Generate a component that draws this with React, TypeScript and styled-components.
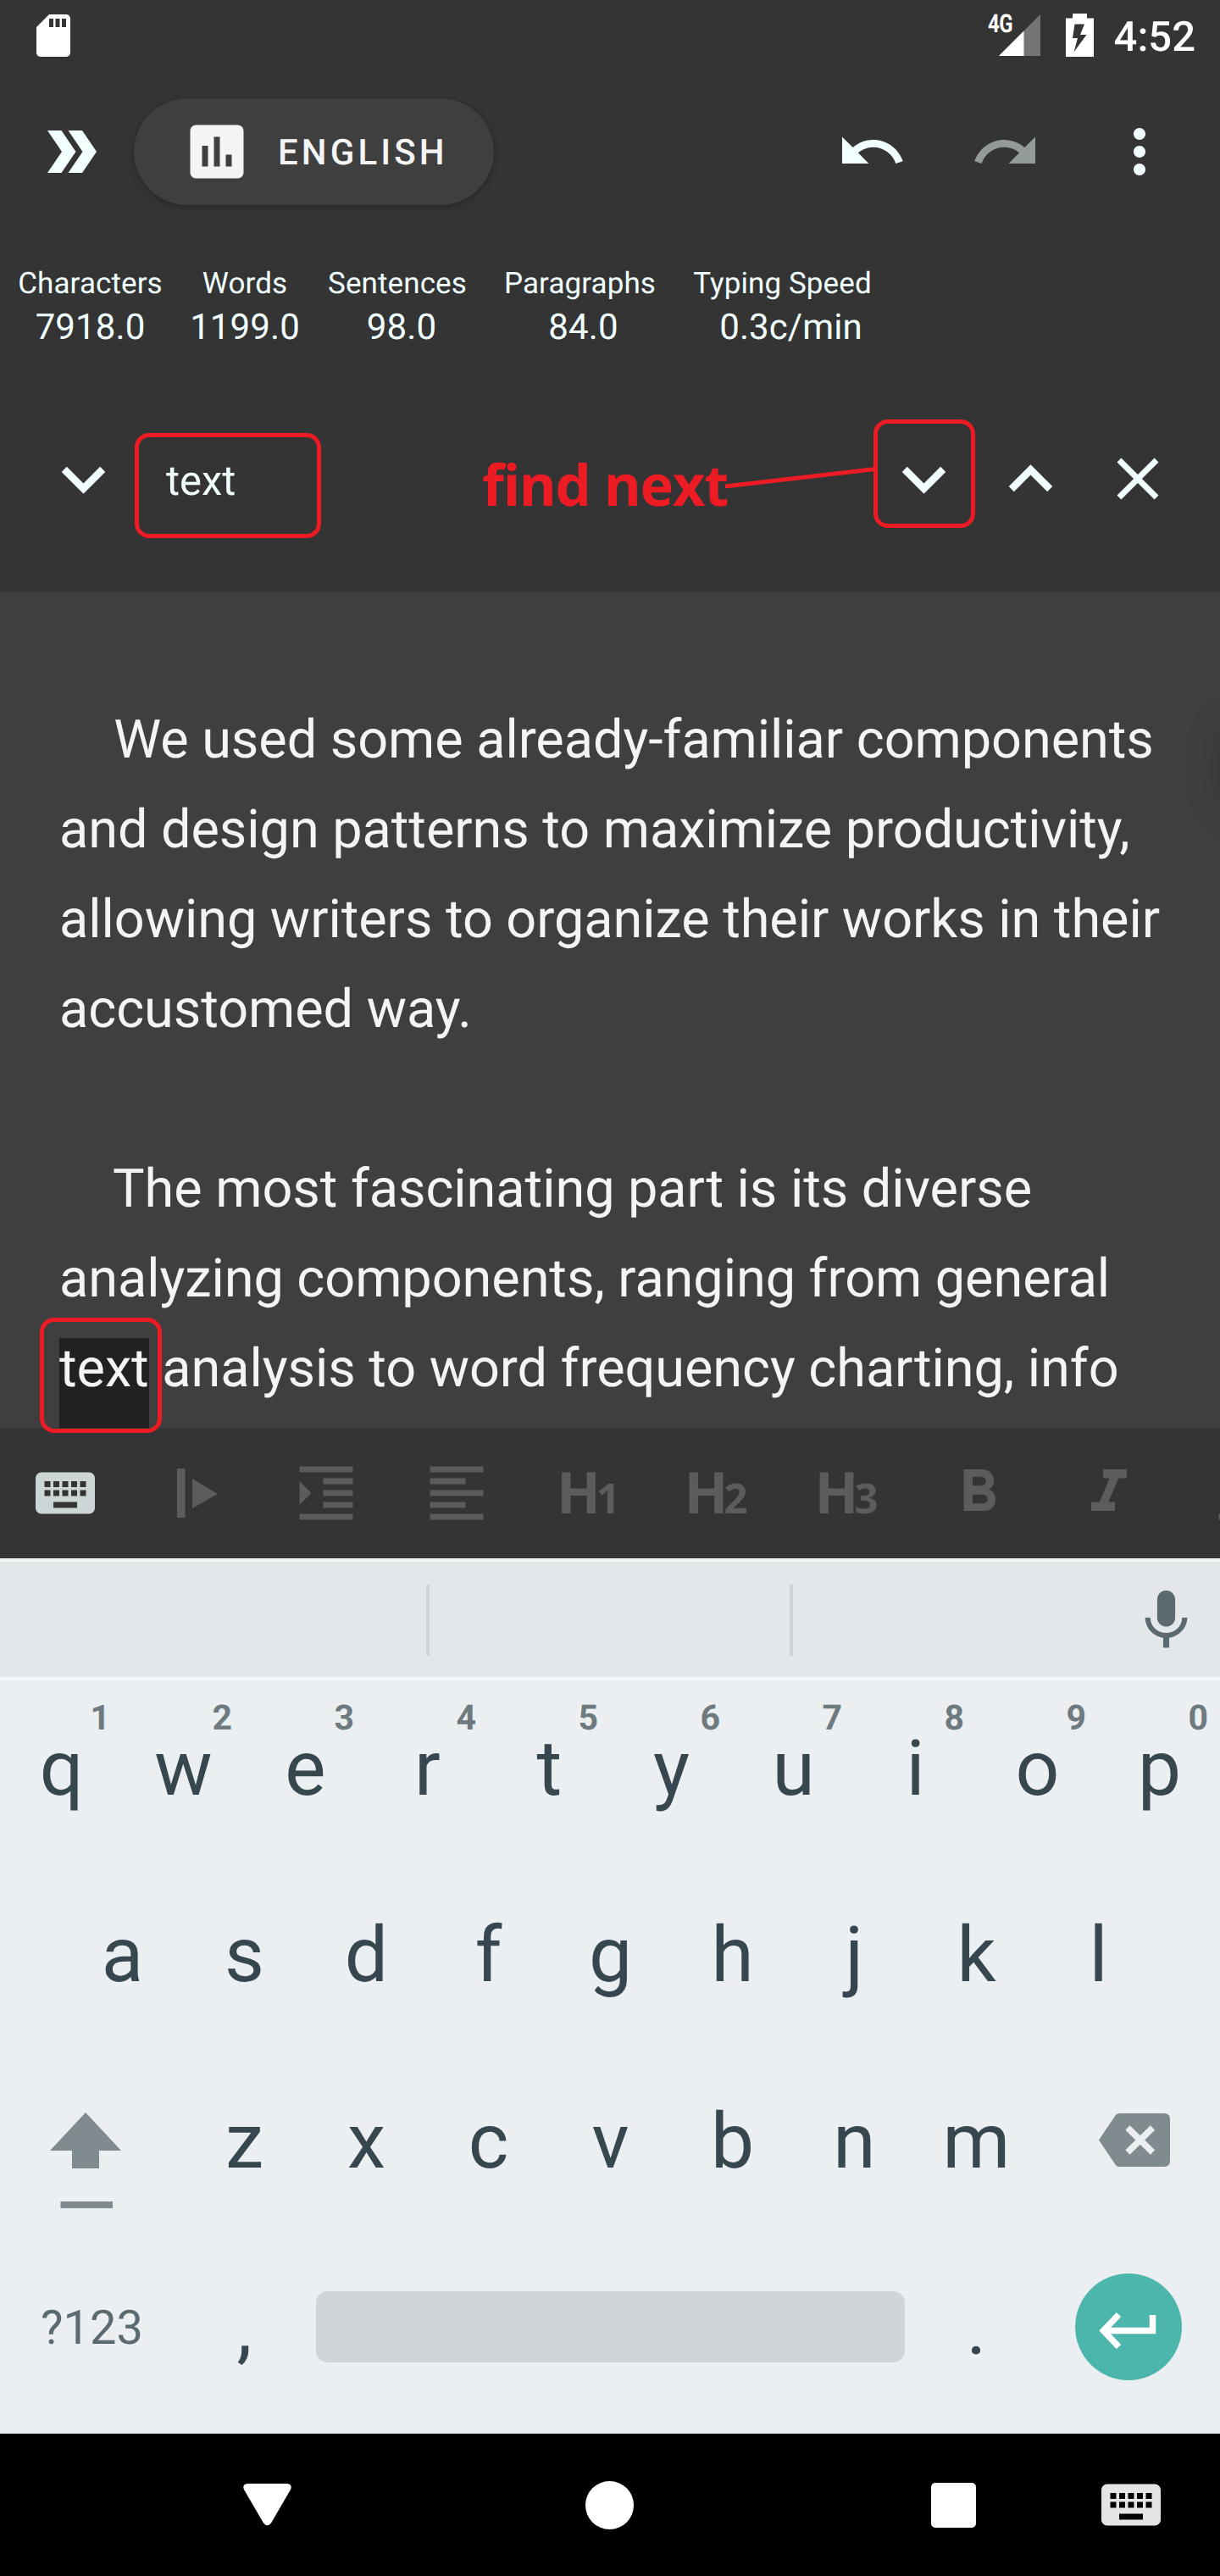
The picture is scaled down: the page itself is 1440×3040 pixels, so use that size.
import React from "react";
import styled, { createGlobalStyle, css } from "styled-components";
import {
  MdSdCard,
  MdAssessment,
  MdUndo,
  MdRedo,
  MdMoreVert,
  MdExpandMore,
  MdExpandLess,
  MdClose,
  MdKeyboard,
  MdFormatIndentIncrease,
  MdFormatAlignLeft,
  MdFormatBold,
  MdFormatItalic,
  MdFormatUnderlined,
  MdMic,
} from "react-icons/md";

const color = {
  bar: "#343434",
  page: "#3f3f3f",
  azure: "#f2ffff",
  paper: "#f4f4f4",
  mark: "#ed1c24",
  key: "#37474f",
  muted: "#808b8f",
  board: "#eceff1",
};

const GlobalStyle = createGlobalStyle`
  * { box-sizing: border-box; }
  body { margin: 0; background: ${color.bar}; }
  svg { display: block; flex: none; }
`;

const Screen = styled.div`
  position: relative;
  width: 1440px;
  height: 3040px;
  overflow: hidden;
  display: flex;
  flex-direction: column;
  background: ${color.bar};
  font-family: Roboto, sans-serif;
  text-rendering: geometricPrecision;
`;

/* Status bar */

const StatusBar = styled.header`
  height: 84px;
  flex: none;
  display: flex;
  padding: 0 29px 0 33px;
  color: #fff;
`;

const StatusIcon = styled.div`
  padding-top: 12px;
`;

const StatusRight = styled.div`
  margin-left: auto;
  display: flex;
`;

const Network = styled.span`
  width: 13px;
  padding-top: 12px;
  font-size: 30px;
  line-height: 34px;
  font-weight: 700;
  letter-spacing: -0.5px;
  white-space: nowrap;
  transform: scaleX(0.8);
  transform-origin: left;
`;

const Clock = styled.span`
  padding: 15px 0 0 24px;
  font-size: 49px;
  line-height: 57px;
  font-weight: 500;
`;

/* Application bar */

const AppBar = styled.nav`
  height: 190px;
  flex: none;
  display: flex;
  align-items: center;
  padding: 0 53px 0 56px;
  color: ${color.azure};
`;

const LanguagePill = styled.button`
  height: 126px;
  width: 425px;
  margin-left: 44px;
  padding: 0 0 0 56px;
  border: 0;
  border-radius: 63px;
  display: flex;
  align-items: center;
  gap: 30px;
  background: ${color.page};
  color: ${color.paper};
  box-shadow: 0 3px 9px rgba(0, 0, 0, 0.2), 0 0 3px rgba(0, 0, 0, 0.15);
  font: 500 42px/50px Roboto, sans-serif;
  letter-spacing: 4.1px;
  text-rendering: inherit;
`;

const PillText = styled.span`
  padding-top: 3px;
`;

const Actions = styled.div`
  margin-left: auto;
  display: flex;
  gap: 74px;
`;

const Dim = styled.span`
  opacity: 0.5;
`;

/* Statistics */

const Stats = styled.section`
  height: 166px;
  flex: none;
  display: flex;
  padding: 40px 0 0 21px;
  color: ${color.azure};
`;

const Stat = styled.div<{ $width: number }>`
  width: ${(p) => p.$width}px;
  display: flex;
  flex-direction: column;
  align-items: center;
  white-space: nowrap;
`;

const StatLabel = styled.span`
  font-size: 35px;
  line-height: 41px;
  letter-spacing: 0.1px;
`;

const StatValue = styled.span<{ $shift: number }>`
  margin-top: 7px;
  padding-left: ${(p) => p.$shift}px;
  font-size: 42px;
  line-height: 49px;
  letter-spacing: 0.1px;
`;

/* Find bar */

const FindBar = styled.section`
  height: 258px;
  flex: none;
  display: flex;
  align-items: center;
  padding: 0 46px 8px 47px;
  color: ${color.azure};
`;

const Query = styled.span`
  margin: 4px 0 0 46px;
  font-size: 49px;
  line-height: 57px;
`;

const FindActions = styled.div`
  margin-left: auto;
  display: flex;
  align-items: center;
  gap: 23px;
`;

const CloseSlot = styled.span`
  width: 103px;
  display: flex;
  justify-content: center;
`;

/* Editor */

const Editor = styled.main`
  position: relative;
  height: 987px;
  flex: none;
  overflow: hidden;
  padding: 123px 0 0 70px;
  background: ${color.page};
  color: ${color.paper};
  font-size: 63px;
  line-height: 106px;
  letter-spacing: -0.05px;
`;

const Paragraph = styled.p`
  margin: 0 0 106px;
  text-indent: 2px;
  white-space: pre;
`;

const Found = styled.mark`
  padding-bottom: 33px;
  background: #212121;
  color: inherit;
`;

const DrawerShadow = styled.div`
  position: absolute;
  left: 1440px;
  top: 158px;
  width: 80px;
  height: 100px;
  box-shadow: 0 0 46px rgba(0, 0, 0, 0.12);
`;

/* Formatting bar */

const FormatBar = styled.div`
  height: 154px;
  flex: none;
  display: flex;
  overflow: hidden;
  color: #5b5d5d;
`;

const FormatButton = styled.span<{ $active?: boolean; $nudge?: number }>`
  width: 154px;
  flex: none;
  padding-left: ${(p) => p.$nudge ?? 0}px;
  display: flex;
  align-items: center;
  justify-content: center;
  ${(p) => p.$active && css`color: #cdd6d6;`}
`;

const Heading = styled.span<{ $left: number; $right: number }>`
  display: flex;
  align-items: baseline;
  padding: 0 ${(p) => p.$right}px 4px ${(p) => p.$left}px;
  font: 700 68px/94px "Open Sans", sans-serif;
`;

const HeadingMark = styled.span`
  letter-spacing: -5px;
`;

const HeadingLevel = styled.span`
  font-size: 49px;
  line-height: 50px;
  letter-spacing: 0;
`;

/* Keyboard */

const Keyboard = styled.section`
  height: 1033px;
  flex: none;
  background: ${color.board};
  color: ${color.key};
`;

const Suggestions = styled.div`
  height: 144px;
  display: flex;
  padding: 27px 21px 0 503px;
  border-top: 4px solid #f0f3f4;
  border-bottom: 4px solid #f4f7f9;
  background: #e3e7ea;
  color: #5b6a71;
`;

const Divider = styled.span`
  width: 4px;
  height: 84px;
  flex: none;
  background: #ced3d6;

  & + & {
    margin-left: 425px;
  }
`;

const MicSlot = styled.span`
  margin-left: auto;
`;

const KeyRow = styled.div<{ $inset?: number }>`
  height: 220px;
  display: flex;
  padding: 0 ${(p) => p.$inset ?? 0}px;
`;

const Key = styled.span`
  position: relative;
  width: 144px;
  flex: none;
  padding: 52px 0 0 1px;
  text-align: center;
  font-size: 91px;
  line-height: 107px;
`;

const KeyHint = styled.sup`
  position: absolute;
  right: 14px;
  top: 21px;
  font-size: 41px;
  line-height: 48px;
  font-weight: 700;
  color: #6d7a80;
`;

const IconKey = styled.span<{ $width: number; $left: number; $top: number }>`
  width: ${(p) => p.$width}px;
  flex: none;
  padding: ${(p) => p.$top}px 0 0 ${(p) => p.$left}px;
  color: ${color.muted};
`;

const SymbolKey = styled.span`
  width: 216px;
  padding: 71px 0 0 1px;
  text-align: center;
  font-size: 56px;
  line-height: 67px;
  color: #5b6a70;
`;

const SpaceBar = styled.span`
  width: 695px;
  height: 84px;
  margin: 61px 12px 0 13px;
  border-radius: 14px;
  background: #d1d5d8;
`;

const EnterKey = styled.span`
  width: 126px;
  height: 126px;
  margin: 40px 0 0 45px;
  padding: 7px 3px 0 0;
  border-radius: 50%;
  display: flex;
  align-items: center;
  justify-content: center;
  background: #4db6ac;
`;

/* System navigation */

const NavBar = styled.footer`
  height: 168px;
  flex: none;
  display: flex;
  align-items: center;
  padding: 0 63px 0 287px;
  background: #000;
  color: #fff;
`;

const HomeDot = styled.span`
  width: 57px;
  height: 57px;
  margin-left: 347px;
  border-radius: 50%;
  background: #fff;
`;

const RecentsSquare = styled.span`
  width: 53px;
  height: 53px;
  margin-left: 351px;
  border-radius: 5px;
  background: #fff;
`;

const InputSwitch = styled.span`
  margin-left: auto;
  color: #e4e4e4;
`;

/* Annotations lying over the screen */

const MarkBox = styled.div<{ $x: number; $y: number; $w: number; $h: number }>`
  position: absolute;
  left: ${(p) => p.$x}px;
  top: ${(p) => p.$y}px;
  width: ${(p) => p.$w}px;
  height: ${(p) => p.$h}px;
  border: 5px solid ${color.mark};
  border-radius: 17px;
`;

const MarkLabel = styled.span`
  position: absolute;
  left: 569px;
  top: 525px;
  font: 700 67px/92px "Open Sans", sans-serif;
  letter-spacing: -1.3px;
  color: ${color.mark};
  white-space: nowrap;
`;

const MarkLine = styled.svg`
  position: absolute;
  left: 850px;
  top: 545px;
`;

const stats = [
  { label: "Characters", value: "7918.0", width: 171, shift: 0 },
  { label: "Words", value: "1199.0", width: 194, shift: 0 },
  { label: "Sentences", value: "98.0", width: 166, shift: 10 },
  { label: "Paragraphs", value: "84.0", width: 265, shift: 8 },
  { label: "Typing Speed", value: "0.3c/min", width: 213, shift: 20 },
];

const paragraphs = [
  [
    "    We used some already-familiar components",
    "and design patterns to maximize productivity,",
    "allowing writers to organize their works in their",
    "accustomed way.",
  ],
  ["    The most fascinating part is its diverse", "analyzing components, ranging from general"],
];

const headings = [
  { level: 1, left: 3, right: 0 },
  { level: 2, left: 0, right: 4 },
  { level: 3, left: 0, right: 4 },
];

const SignalIcon = () => (
  <svg width="49" height="84" viewBox="0 0 49 84">
    <path d="M0 66 49 17V66Z" fill="#757575" />
    <path d="M0 66 29.5 36.5V66Z" fill="#fff" />
  </svg>
);

const BatteryIcon = () => (
  <svg width="63" height="84" viewBox="0 0 63 84">
    <path
      fill="#fff"
      fillRule="evenodd"
      d="M38 16h17v5.5h8V67H30V21.5h8ZM40.500 28.500 38 45h6L39.500 61.500 54.500 41H47L52 28.500Z"
    />
  </svg>
);

const DoubleChevron = () => (
  <svg width="58" height="50" viewBox="0 0 58 50" fill="currentColor">
    <path d="M0 0h16.500L33.500 25 16.500 50H0L17 25Z" />
    <path d="M24.500 0H41L58 25 41 50H24.500L41.500 25Z" />
  </svg>
);

const IndentMarker = () => (
  <svg width="48" height="58" viewBox="0 0 48 58" fill="currentColor">
    <path d="M0 0h9.500v58H0ZM18 12 48 30 18 47Z" />
  </svg>
);

const ShiftIcon = () => (
  <svg width="84" height="114" viewBox="0 0 84 114" fill="currentColor">
    <path d="M42 0 84 45H58V66H26V45H0Z" />
    <path d="M12.500 105h61.500v8H12.500Z" />
  </svg>
);

const BackspaceIcon = () => (
  <svg width="84" height="63" viewBox="0 0 84 63">
    <path d="M24 0H77q7 0 7 7V56q0 7-7 7H24q-3 0-4.500-2.500L0 31.500 19.500 2.500Q21 0 24 0Z" fill="currentColor" />
    <path d="M34 17 63.500 46M63.500 17 34 46" stroke={color.board} strokeWidth="7.500" />
  </svg>
);

const EnterIcon = () => (
  <svg width="68" height="44" viewBox="0 0 68 44" fill="none" stroke="#fff" strokeWidth="7.500">
    <path d="M63.500 4V22.500H7" />
    <path d="M23.500 3.500 5.500 22.500 23.500 41.500" />
  </svg>
);

const BackTriangle = () => (
  <svg width="57" height="50" viewBox="0 0 57 50" fill="currentColor">
    <path d="M5 0H52Q58.500 1 56 7L33 46.500Q28.500 52 24 46.500L1 7Q-1.500 1 5 0Z" />
  </svg>
);

export default function App() {
  return (
    <>
      <GlobalStyle />
      <Screen>
        <StatusBar>
          <StatusIcon>
            <MdSdCard size={60} />
          </StatusIcon>
          <StatusRight>
            <Network>4G</Network>
            <SignalIcon />
            <BatteryIcon />
            <Clock>4:52</Clock>
          </StatusRight>
        </StatusBar>

        <AppBar>
          <DoubleChevron />
          <LanguagePill>
            <MdAssessment size={84} />
            <PillText>ENGLISH</PillText>
          </LanguagePill>
          <Actions>
            <MdUndo size={84} />
            <Dim>
              <MdRedo size={84} />
            </Dim>
            <MdMoreVert size={84} />
          </Actions>
        </AppBar>

        <Stats>
          {stats.map((s) => (
            <Stat key={s.label} $width={s.width}>
              <StatLabel>{s.label}</StatLabel>
              <StatValue $shift={s.shift}>{s.value}</StatValue>
            </Stat>
          ))}
        </Stats>

        <FindBar>
          <MdExpandMore size={103} />
          <Query>text</Query>
          <FindActions>
            <MdExpandMore size={103} />
            <MdExpandLess size={103} />
            <CloseSlot>
              <MdClose size={84} />
            </CloseSlot>
          </FindActions>
        </FindBar>

        <Editor>
          <Paragraph>{paragraphs[0].join("\n")}</Paragraph>
          <Paragraph>
            {paragraphs[1].join("\n") + "\n"}
            <Found>text</Found> analysis to word frequency charting, info
          </Paragraph>
          <DrawerShadow />
        </Editor>

        <FormatBar>
          <FormatButton $active>
            <MdKeyboard size={84} />
          </FormatButton>
          <FormatButton $nudge={4}>
            <IndentMarker />
          </FormatButton>
          <FormatButton>
            <MdFormatIndentIncrease size={84} />
          </FormatButton>
          <FormatButton>
            <MdFormatAlignLeft size={84} />
          </FormatButton>
          {headings.map((h) => (
            <FormatButton key={h.level}>
              <Heading $left={h.left} $right={h.right}>
                <HeadingMark>H</HeadingMark>
                <HeadingLevel>{h.level}</HeadingLevel>
              </Heading>
            </FormatButton>
          ))}
          <FormatButton>
            <MdFormatBold size={84} />
          </FormatButton>
          <FormatButton>
            <MdFormatItalic size={84} />
          </FormatButton>
          <FormatButton>
            <MdFormatUnderlined size={84} />
          </FormatButton>
        </FormatBar>

        <Keyboard>
          <Suggestions>
            <Divider />
            <Divider />
            <MicSlot>
              <MdMic size={85} />
            </MicSlot>
          </Suggestions>
          <KeyRow>
            {"qwertyuiop".split("").map((k, i) => (
              <Key key={k}>
                {k}
                <KeyHint>{(i + 1) % 10}</KeyHint>
              </Key>
            ))}
          </KeyRow>
          <KeyRow $inset={72}>
            {"asdfghjkl".split("").map((k) => (
              <Key key={k}>{k}</Key>
            ))}
          </KeyRow>
          <KeyRow>
            <IconKey $width={216} $left={59} $top={70}>
              <ShiftIcon />
            </IconKey>
            {"zxcvbnm".split("").map((k) => (
              <Key key={k}>{k}</Key>
            ))}
            <IconKey $width={216} $left={73} $top={71}>
              <BackspaceIcon />
            </IconKey>
          </KeyRow>
          <KeyRow>
            <SymbolKey>?123</SymbolKey>
            <Key>,</Key>
            <SpaceBar />
            <Key>.</Key>
            <EnterKey>
              <EnterIcon />
            </EnterKey>
          </KeyRow>
        </Keyboard>

        <NavBar>
          <BackTriangle />
          <HomeDot />
          <RecentsSquare />
          <InputSwitch>
            <MdKeyboard size={84} />
          </InputSwitch>
        </NavBar>

        <MarkBox $x={159} $y={511} $w={220} $h={124} />
        <MarkBox $x={1031} $y={495} $w={120} $h={128} />
        <MarkBox $x={47} $y={1555} $w={144} $h={136} />
        <MarkLabel>find next</MarkLabel>
        <MarkLine width="184" height="36" viewBox="0 0 184 36">
          <path d="M6 29 184 8.500" stroke={color.mark} strokeWidth="5" />
        </MarkLine>
      </Screen>
    </>
  );
}
